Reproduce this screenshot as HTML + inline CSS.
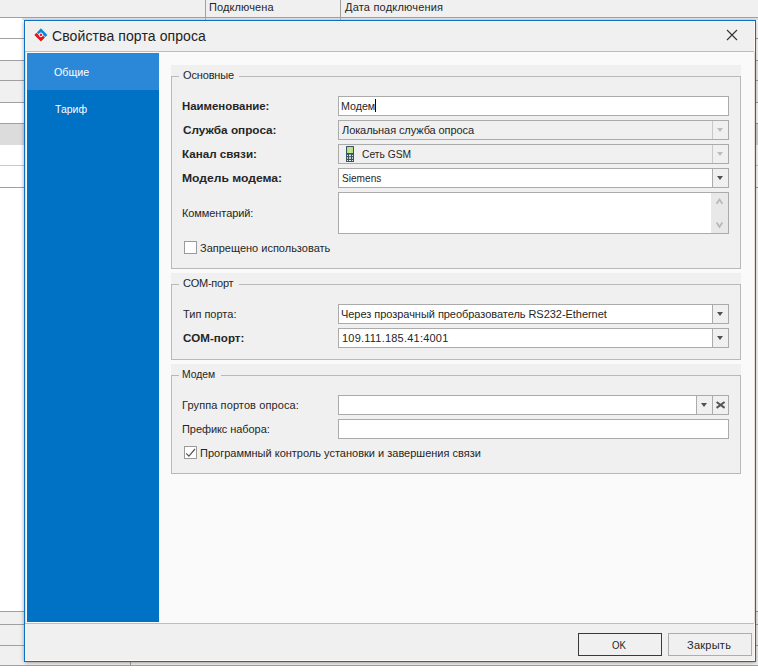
<!DOCTYPE html>
<html><head><meta charset="utf-8">
<style>
*{margin:0;padding:0;box-sizing:border-box}
html,body{width:758px;height:672px;overflow:hidden;background:#fff;position:relative;font-family:"Liberation Sans",sans-serif;color:#262626}
.a{position:absolute}
.t{position:absolute;font-size:11px;line-height:13px;white-space:nowrap}
.b{font-weight:bold}
.hl{position:absolute;left:0;width:758px;height:1px;background:#a0a0a0}
.row{position:absolute;left:0;width:758px}
.gb{position:absolute;background:#f0f0f0}
.gbd{position:absolute;border:1px solid #b9b9b9;border-top:none}
.gtl{position:absolute;height:1px;background:#b9b9b9}
.inp{position:absolute;background:#fff;border:1px solid #ababab}
.dis{background:#f0f0f0}
.sep{position:absolute;top:0;bottom:0;width:1px;background:#ababab}
.arr{position:absolute;width:0;height:0;border-left:3.7px solid transparent;border-right:3.7px solid transparent;border-top:4px solid #505050}
</style></head><body>
<!-- background grid -->
<div class="a" style="left:0;top:0;width:758px;height:17px;background:#f0f0f0"></div>
<div class="a" style="left:205px;top:0;width:1px;height:20px;background:#a0a0a0"></div>
<div class="a" style="left:340px;top:0;width:1px;height:20px;background:#a0a0a0"></div>
<div class="t" style="left:209px;top:1px;letter-spacing:0.1px">Подключена</div>
<div class="t" style="left:345px;top:1px;letter-spacing:0.2px">Дата подключения</div>
<div class="hl" style="top:17px"></div>
<div class="row" style="top:61px;height:19px;background:#f0f0f0"></div>
<div class="row" style="top:81px;height:21px;background:#f0f0f0"></div>
<div class="row" style="top:124px;height:21px;background:#dcdcdc"></div>
<div class="row" style="top:612px;height:53px;background:#f0f0f0"></div>
<div class="hl" style="top:38px"></div>
<div class="hl" style="top:60px"></div>
<div class="hl" style="top:80px"></div>
<div class="hl" style="top:102px"></div>
<div class="hl" style="top:123px"></div>
<div class="hl" style="top:165px;background:#c8c8c8"></div>
<div class="hl" style="top:187px"></div>
<div class="hl" style="top:611px"></div>
<div class="hl" style="top:624px"></div>
<div class="hl" style="top:645px"></div>
<div class="hl" style="top:665px"></div>
<div class="a" style="left:130px;top:645px;width:1px;height:20px;background:#a0a0a0"></div>

<div class="a" style="left:22px;top:18px;width:736px;height:1px;background:#e2e2e2"></div><div class="a" style="left:22px;top:19px;width:736px;height:1px;background:#e4ddd7"></div>
<div class="a" style="left:205px;top:18px;width:1px;height:2px;background:#b0b0b0"></div>
<div class="a" style="left:340px;top:18px;width:1px;height:2px;background:#b0b0b0"></div>
<!-- dialog -->
<div class="a" style="left:24px;top:20px;width:732px;height:642px;border:1px solid #0b6fc8;background:#f0f0f0;box-shadow:-1px 1px 4px -1px rgba(0,0,0,0.35),2px 1px 3px rgba(0,0,0,0.12)">
</div>
<div class="a" style="left:25px;top:21px;width:730px;height:640px;border:1px solid #fdf8f3"></div>
<!-- title -->
<svg class="a" style="left:30px;top:24px" width="24" height="24" viewBox="30 24 24 24">
  <g transform="translate(40.9,34.9) rotate(45)">
  <rect x="-5.3" y="-5.3" width="10.6" height="10.6" fill="#fbfbfb" opacity="0.6"/>
  <path d="M-4.65 -4.65H4.65V-1.6H-1.6V1.1H-4.65Z" fill="#0b8ad8"/>
  <path d="M4.65 4.65H-4.65V1.6H1.6V-1.1H4.65Z" fill="#e0141e"/>
  <circle cx="0" cy="0" r="2.2" fill="#fff" opacity="0.9"/><circle cx="0" cy="0" r="1.3" fill="#ff0a12"/>
  </g>
</svg>
<div class="t" style="left:52px;top:28px;font-size:14px;line-height:16px;color:#222;letter-spacing:0.1px">Свойства порта опроса</div>
<svg class="a" style="left:726px;top:29px" width="12" height="12" viewBox="0 0 12 12">
  <path d="M1 1 L11 11 M11 1 L1 11" stroke="#333" stroke-width="1.1"/>
</svg>
<div class="a" style="left:25px;top:51px;width:729px;height:1px;background:#bdbdbd"></div>
<div class="a" style="left:25px;top:52px;width:730px;height:571px;background:#fafafa"></div>
<div class="a" style="left:25px;top:52px;width:1px;height:571px;background:#e2ddd8"></div><div class="a" style="left:26px;top:52px;width:1px;height:571px;background:#fbf6f1"></div><div class="a" style="left:754px;top:52px;width:1px;height:571px;background:#e2ddd8"></div>
<!-- left nav -->
<div class="a" style="left:27px;top:53px;width:132px;height:37px;background:#2b88d8"></div>
<div class="a" style="left:27px;top:90px;width:132px;height:532px;background:#0072c6"></div>
<div class="t" style="left:54px;top:66px;color:#fff;transform:scaleX(0.971);transform-origin:0 0">Общие</div>
<div class="t" style="left:55px;top:103px;color:#fff;transform:scaleX(0.951);transform-origin:0 0">Тариф</div>
<!-- footer -->
<div class="a" style="left:25px;top:623px;width:729px;height:1px;background:#bdbdbd"></div>
<div class="a" style="left:578px;top:633px;width:84px;height:23px;border:1px solid #3a3a3a;background:#f0f0f0"></div>
<div class="t" style="left:612px;top:639px;transform:scaleX(0.875);transform-origin:0 0">OK</div>
<div class="a" style="left:668px;top:633px;width:84px;height:23px;border:1px solid #adadad;background:#f0f0f0"></div>
<div class="t" style="left:687px;top:639px;letter-spacing:0.25px">Закрыть</div>

<!-- group 1 -->
<div class="gb" style="left:171px;top:65px;width:570px;height:204px"></div>
<div class="gbd" style="left:171px;top:76px;width:570px;height:193px"></div>
<div class="gtl" style="left:171px;top:76px;width:8px"></div>
<div class="gtl" style="left:239px;top:76px;width:502px"></div>
<div class="t" style="left:183px;top:69px;letter-spacing:-0.15px">Основные</div>

<div class="t b" style="left:182px;top:100px;transform:scaleX(1.036);transform-origin:0 0">Наименование:</div>
<div class="inp" style="left:338px;top:96px;width:391px;height:20px"></div>
<div class="t" style="left:341px;top:100px;transform:scaleX(0.97);transform-origin:0 0">Модем</div>
<div class="a" style="left:375px;top:99px;width:1px;height:13px;background:#000"></div>

<div class="t b" style="left:183px;top:124px;transform:scaleX(1.069);transform-origin:0 0">Служба опроса:</div>
<div class="inp dis" style="left:338px;top:120px;width:391px;height:20px"><div class="sep" style="left:373px;background:#c8c8c8"></div><div class="arr" style="left:378px;top:7px;border-top-color:#bcbcbc"></div></div>
<div class="t" style="left:342px;top:124px;letter-spacing:-0.09px">Локальная служба опроса</div>

<div class="t b" style="left:182px;top:148px;transform:scaleX(1.058);transform-origin:0 0">Канал связи:</div>
<div class="inp dis" style="left:338px;top:144px;width:391px;height:20px"><div class="sep" style="left:373px;background:#c8c8c8"></div><div class="arr" style="left:378px;top:7px;border-top-color:#bcbcbc"></div></div>
<svg class="a" style="left:346px;top:146px" width="8" height="16" viewBox="0 0 8 16">
  <rect x="0" y="0" width="8" height="16" rx="0.6" fill="#3a5264"/>
  <rect x="1" y="1" width="6" height="6" fill="#b5e07f"/>
  <rect x="3" y="1" width="2" height="6" fill="#c4e59c"/>
  <g fill="#e8ecee"><rect x="1" y="9" width="1" height="1"/><rect x="3" y="8.6" width="2" height="1.6"/><rect x="6" y="9" width="1" height="1"/>
  <rect x="1" y="11.2" width="1" height="1.6"/><rect x="3" y="11.2" width="2" height="1.6"/><rect x="6" y="11.2" width="1" height="1.6"/>
  <rect x="1" y="14" width="1" height="1"/><rect x="3" y="14" width="2" height="1"/><rect x="6" y="14" width="1" height="1"/></g>
</svg>
<div class="t" style="left:362px;top:148px;transform:scaleX(0.933);transform-origin:0 0">Сеть GSM</div>

<div class="t b" style="left:182px;top:172px;transform:scaleX(1.101);transform-origin:0 0">Модель модема:</div>
<div class="inp" style="left:338px;top:168px;width:391px;height:20px"><div class="a" style="left:374px;top:0;width:15px;height:18px;background:#f0f0f0"></div><div class="sep" style="left:373px"></div><div class="arr" style="left:378px;top:7px"></div></div>
<div class="t" style="left:342px;top:172px;transform:scaleX(0.919);transform-origin:0 0">Siemens</div>

<div class="t" style="left:182px;top:207px;letter-spacing:-0.09px">Комментарий:</div>
<div class="inp" style="left:338px;top:192px;width:391px;height:42px"><div class="a" style="left:372px;top:0;width:17px;height:40px;background:#e8e8e8"></div>
<svg class="a" style="left:377px;top:5px" width="8" height="31" viewBox="0 0 8 31"><path d="M0.6 5.8L3.5 1.6L6.4 5.8M0.6 24.6L3.5 28.8L6.4 24.6" fill="none" stroke="#b8b8b8" stroke-width="1.8"/></svg></div>

<div class="a" style="left:184px;top:241px;width:13px;height:13px;border:1px solid #9a9a9a;background:#fff"></div>
<div class="t" style="left:200px;top:242px">Запрещено использовать</div>

<!-- group 2 -->
<div class="gb" style="left:171px;top:273px;width:570px;height:87px"></div>
<div class="gbd" style="left:171px;top:284px;width:570px;height:76px"></div>
<div class="gtl" style="left:171px;top:284px;width:8px"></div>
<div class="gtl" style="left:239px;top:284px;width:502px"></div>
<div class="t" style="left:183px;top:277px;letter-spacing:-0.25px">COM-порт</div>

<div class="t" style="left:183px;top:308px">Тип порта:</div>
<div class="inp" style="left:338px;top:304px;width:391px;height:20px"><div class="a" style="left:374px;top:0;width:15px;height:18px;background:#f0f0f0"></div><div class="sep" style="left:373px"></div><div class="arr" style="left:378px;top:7px"></div></div>
<div class="t" style="left:341px;top:308px;letter-spacing:-0.04px">Через прозрачный преобразователь RS232-Ethernet</div>

<div class="t b" style="left:183px;top:332px;transform:scaleX(1.052);transform-origin:0 0">COM-порт:</div>
<div class="inp" style="left:338px;top:328px;width:391px;height:20px"><div class="a" style="left:374px;top:0;width:15px;height:18px;background:#f0f0f0"></div><div class="sep" style="left:373px"></div><div class="arr" style="left:378px;top:7px"></div></div>
<div class="t" style="left:342px;top:332px;letter-spacing:0.22px">109.111.185.41:4001</div>

<!-- group 3 -->
<div class="gb" style="left:171px;top:364px;width:570px;height:110px"></div>
<div class="gbd" style="left:171px;top:375px;width:570px;height:99px"></div>
<div class="gtl" style="left:171px;top:375px;width:8px"></div>
<div class="gtl" style="left:221px;top:375px;width:520px"></div>
<div class="t" style="left:182px;top:368px;transform:scaleX(0.941);transform-origin:0 0">Модем</div>

<div class="t" style="left:182px;top:399px;letter-spacing:0.1px">Группа портов опроса:</div>
<div class="inp" style="left:338px;top:395px;width:391px;height:20px"><div class="a" style="left:358px;top:0;width:31px;height:18px;background:#f0f0f0"></div><div class="sep" style="left:357px"></div><div class="sep" style="left:373px"></div><div class="arr" style="left:362px;top:7px"></div>
<svg class="a" style="left:376px;top:5px" width="11" height="8" viewBox="0 0 11 8"><path d="M1.6 1L9.6 6.9M9.6 1L1.6 6.9" stroke="#555" stroke-width="2"/></svg></div>

<div class="t" style="left:182px;top:423px;letter-spacing:-0.07px">Префикс набора:</div>
<div class="inp" style="left:338px;top:419px;width:391px;height:20px"></div>

<div class="a" style="left:184px;top:446px;width:13px;height:13px;border:1px solid #9a9a9a;background:#fff"></div>
<svg class="a" style="left:184px;top:446px" width="13" height="13" viewBox="0 0 13 13"><path d="M2.2 7.3L4.9 10.1L11 3" fill="none" stroke="#555" stroke-width="1.2"/></svg>
<div class="t" style="left:200px;top:447px;letter-spacing:0px">Программный контроль установки и завершения связи</div>

</body></html>
